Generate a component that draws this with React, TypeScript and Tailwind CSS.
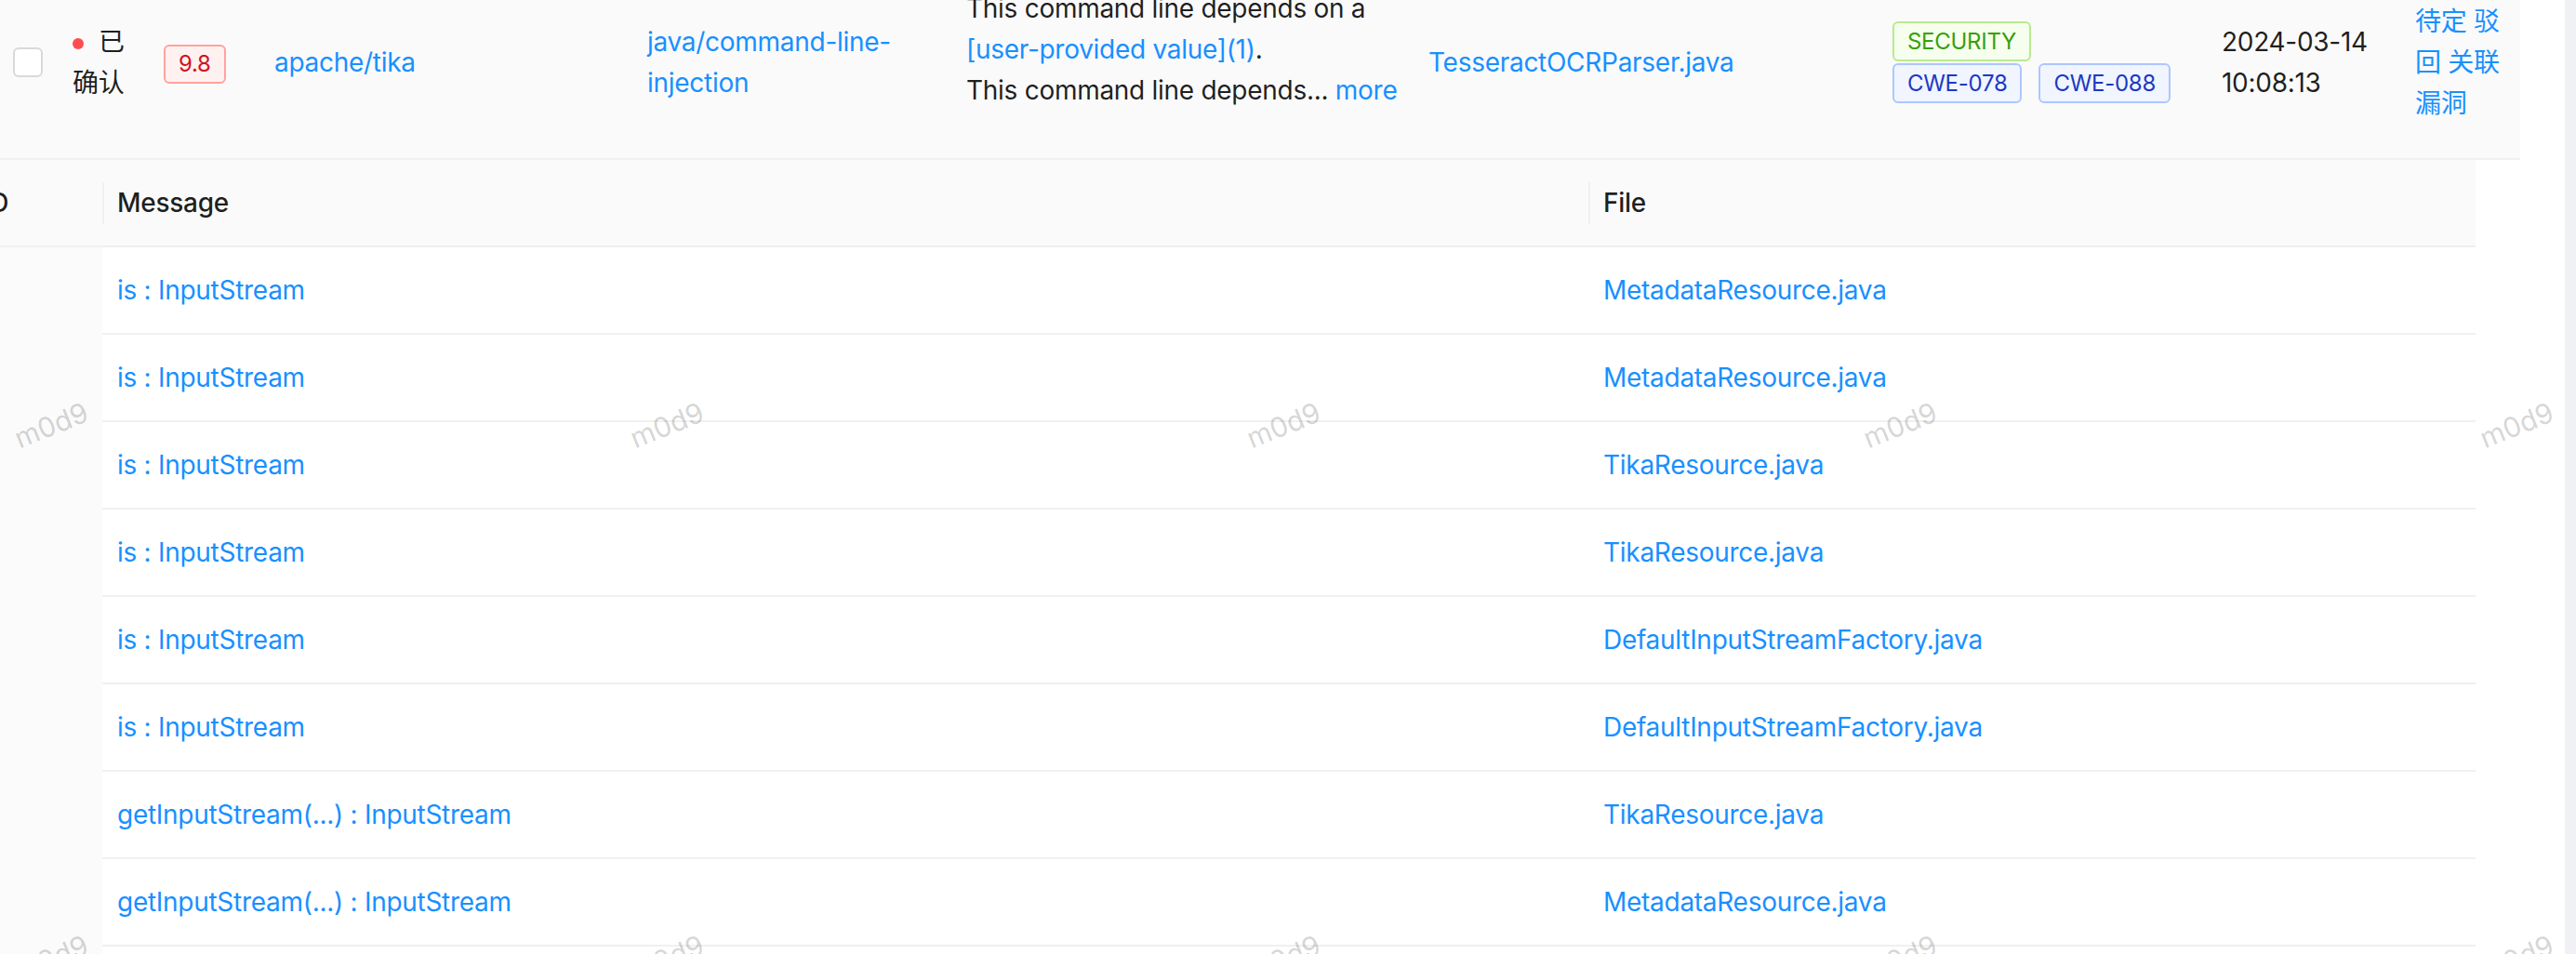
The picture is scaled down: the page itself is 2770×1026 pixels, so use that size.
import React from "react";

const detailRows: [string, string][] = [
  ["is : InputStream", "MetadataResource.java"],
  ["is : InputStream", "MetadataResource.java"],
  ["is : InputStream", "TikaResource.java"],
  ["is : InputStream", "TikaResource.java"],
  ["is : InputStream", "DefaultInputStreamFactory.java"],
  ["is : InputStream", "DefaultInputStreamFactory.java"],
  ["getInputStream(...) : InputStream", "TikaResource.java"],
  ["getInputStream(...) : InputStream", "MetadataResource.java"],
  ["getInputStream(...) : InputStream", "TikaResource.java"],
];

const marks: [number, number][] = [];
[457, 1030].forEach((y) => {
  [55, 717, 1380, 2043, 2706].forEach((x) => marks.push([x, y]));
});

function CweTag({ children }: { children: React.ReactNode }) {
  return (
    <span className="inline-block h-[43px] px-[14px] text-[24px] leading-[39px] border-2 border-[#adc6ff] bg-[#f0f5ff] text-[#1d39c4] rounded-[6px] whitespace-nowrap">
      {children}
    </span>
  );
}

export default function App() {
  return (
    <div className="w-[2770px] h-[1026px] overflow-hidden bg-white flex font-['Inter','Noto_Sans_CJK_SC',sans-serif] text-[28px] leading-[44px] tracking-[-0.01em] text-[rgba(0,0,0,0.88)]">
      <div className="relative w-[2758px] h-[1026px] overflow-hidden bg-white">
        {/* Main expanded row */}
        <div className="w-[2710px] h-[208px] -mt-[36px] grid grid-cols-[62px_114px_119px_401px_343px_497px_499px_354px_208px_113px] items-center bg-[#fafafa] border-b-2 border-[#f0f0f0]">
          <div className="pl-[14px]">
            <span className="block w-[32px] h-[32px] rounded-[6px] border-2 border-[#d9d9d9] bg-white" />
          </div>
          <div className="pl-[16px]">
            <div className="w-[60px]">
              <span className="inline-block w-[12px] h-[12px] rounded-full bg-[#ff4d4f] align-middle" />
              <span className="ml-[16px]">已确认</span>
            </div>
          </div>
          <div>
            <span className="inline-block h-[42px] px-[14px] text-[24px] leading-[38px] border-2 border-[#ffa39e] bg-[#fff1f0] text-[#cf1322] rounded-[6px]">
              9.8
            </span>
          </div>
          <div>
            <a className="text-[#1890ff]">apache/tika</a>
          </div>
          <div>
            <div className="w-[300px] text-[#1890ff]">java/command-line-injection</div>
          </div>
          <div className="pb-[28px] whitespace-nowrap">
            <div>This command line depends on a</div>
            <div>
              <a className="text-[#1890ff]">[user-provided value](1)</a>.
            </div>
            <div>
              This command line depends... <a className="text-[#1890ff]">more</a>
            </div>
          </div>
          <div>
            <a className="text-[#1890ff]">TesseractOCRParser.java</a>
          </div>
          <div className="flex flex-col items-start gap-[2px]">
            <span className="inline-block h-[43px] px-[14px] text-[24px] leading-[39px] border-2 border-[#b7eb8f] bg-[#f6ffed] text-[#389e0d] rounded-[6px]">
              SECURITY
            </span>
            <div className="flex gap-[18px]">
              <CweTag>CWE-078</CweTag>
              <CweTag>CWE-088</CweTag>
            </div>
          </div>
          <div className="whitespace-nowrap">
            <div>2024-03-14</div>
            <div>10:08:13</div>
          </div>
          <div>
            <div className="w-[96px] text-[#1890ff]">
              <a>待定</a> <a>驳回</a> <a>关联漏洞</a>
            </div>
          </div>
        </div>

        {/* Nested detail table */}
        <div className="w-[2662px]">
          <div className="grid grid-cols-[110px_1598px_954px] h-[94px] bg-[#fafafa] border-b-2 border-[#f0f0f0] font-medium">
            <div className="flex items-center">
              <span className="-ml-[18px]">ID</span>
            </div>
            <div className="flex items-center">
              <span className="w-[2px] h-[45px] bg-[#f0f0f0] mr-[14px]" />
              <span>Message</span>
            </div>
            <div className="flex items-center">
              <span className="w-[2px] h-[45px] bg-[#f0f0f0] mr-[14px]" />
              <span>File</span>
            </div>
          </div>
          <div className="grid grid-cols-[110px_2552px]">
            <div className="bg-[#fbfbfb]" />
            <div>
              {detailRows.map(([msg, file], i) => (
                <div
                  key={i}
                  className="grid grid-cols-[1598px_954px] border-b-2 border-[#f0f0f0] text-[#1890ff]"
                >
                  <div className="px-[16px] py-[24px] whitespace-nowrap">{msg}</div>
                  <div className="px-[16px] py-[24px] whitespace-nowrap">{file}</div>
                </div>
              ))}
            </div>
          </div>
        </div>

        {/* Watermark overlay */}
        <div className="absolute inset-0 pointer-events-none">
          {marks.map(([x, y], i) => (
            <span
              key={i}
              className="absolute -translate-x-1/2 -translate-y-1/2 -rotate-[22deg] text-[30px] leading-[36px] tracking-normal text-[rgba(0,0,0,0.18)] whitespace-nowrap"
              style={{ left: x, top: y }}
            >
              m0d9
            </span>
          ))}
        </div>
      </div>
      <div className="w-[12px] h-[1026px] bg-[#f0f1f5]" />
    </div>
  );
}
